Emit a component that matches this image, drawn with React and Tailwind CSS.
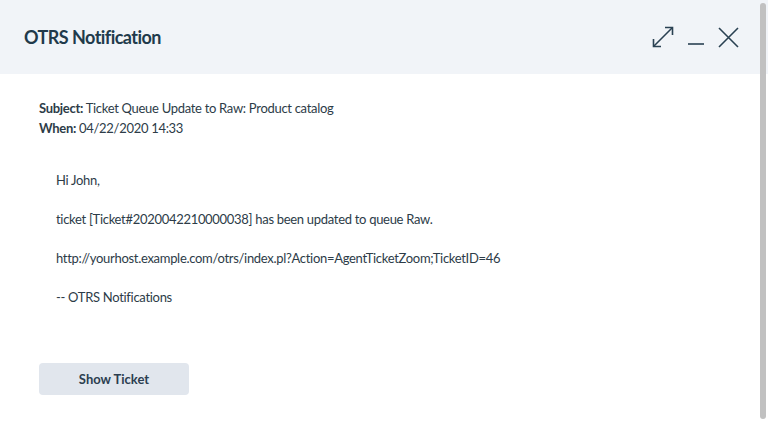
import { Fragment } from "react";

// ----------------------------------------------------------------------

const paragraphs = [
  "Hi John,",
  "ticket [Ticket#2020042210000038] has been updated to queue Raw.",
  "http://yourhost.example.com/otrs/index.pl?Action=AgentTicketZoom;TicketID=46",
  "-- OTRS Notifications",
];

const ExpandIcon = () => (
  <svg width="22" height="22" viewBox="0 0 22 22" fill="none" stroke="currentColor" strokeWidth="1.6">
    <path d="M1.5 20.5 L20.5 1.5" />
    <path d="M13 1.5 H20.5 V9" />
    <path d="M1.5 13 V20.5 H9" />
  </svg>
);

const MinimizeIcon = () => (
  <svg width="16" height="22" viewBox="0 0 16 22" fill="none" stroke="currentColor" strokeWidth="1.6">
    <path d="M0 18 H16" />
  </svg>
);

const CloseIcon = () => (
  <svg width="21" height="21" viewBox="0 0 21 21" fill="none" stroke="currentColor" strokeWidth="1.6">
    <path d="M1 1 L20 20 M20 1 L1 20" />
  </svg>
);

export default function App() {
  return (
    <div className="relative h-[425px] w-[768px] overflow-hidden bg-white font-['Lato',sans-serif] text-[#2d3c48]">
      {/* header */}
      <div className="flex h-[74px] items-center justify-between bg-[#f1f4f8] pl-6 pr-[29px]">
        <h1 className="text-[18px] font-bold tracking-[-0.55px] text-[#213a4b]">OTRS Notification</h1>
        <div className="flex items-center gap-[14px] text-[#2a4152]">
          <ExpandIcon />
          <MinimizeIcon />
          <CloseIcon />
        </div>
      </div>

      {/* body */}
      <div className="px-[39px] pt-[24px] text-[13px] leading-[20px] tracking-[-0.3px]">
        <p><span className="font-bold">Subject:</span> Ticket Queue Update to Raw: Product catalog</p>
        <p><span className="font-bold">When:</span> 04/22/2020 14:33</p>

        <div className="mt-[32px] flex flex-col gap-[19px] pl-[17px]">
          {paragraphs.map((line, key) => (
            <Fragment key={key}>
              <p>{line}</p>
            </Fragment>
          ))}
        </div>

        <button className="mt-[56px] h-[32px] w-[150px] rounded-[4px] bg-[#e1e6ed] text-[13px] font-bold tracking-normal text-[#2c3e50]">
          Show Ticket
        </button>
      </div>

      {/* scrollbar thumb */}
      <div className="absolute right-[2px] top-[3px] h-[416px] w-[6px] rounded-full bg-[#c1c1c1]" />
    </div>
  );
}
